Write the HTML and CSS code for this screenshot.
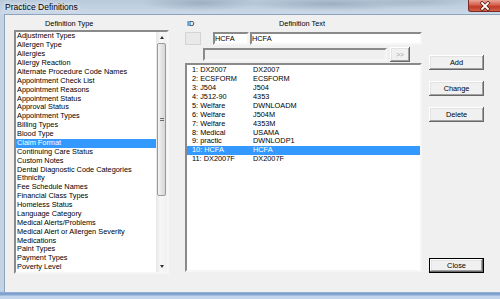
FILE: index.html
```html
<!doctype html>
<html>
  <head>
    <meta charset="UTF-8" />
    <title>Practice Definitions</title>
    <link rel="stylesheet" href="styles.css">
  </head>
  <body>
    <div class="window">
      <div class="titlebar">
        <span class="title">Practice Definitions</span>
        <span class="close-btn">
          <svg width="12" height="10" viewBox="0 0 12 10">
            <path d="M3 2 L9 8 M9 2 L3 8" stroke="#5a1a12" stroke-width="3.2" stroke-linecap="square" />
            <path d="M3 2 L9 8 M9 2 L3 8" stroke="#ffffff" stroke-width="1.8" stroke-linecap="square" />
          </svg>
        </span>
      </div>

      <div class="frame">
        <div class="client">
          <div class="type-panel">
            <div class="caption type-caption">Definition Type</div>
            <div class="listbox sunken">
              <ul class="type-list">
                <li>Adjustment Types</li>
                <li>Allergen Type</li>
                <li>Allergies</li>
                <li>Allergy Reaction</li>
                <li>Alternate Procedure Code Names</li>
                <li>Appointment Check List</li>
                <li>Appointment Reasons</li>
                <li>Appointment Status</li>
                <li>Approval Status</li>
                <li>Appointment Types</li>
                <li>Billing Types</li>
                <li>Blood Type</li>
                <li class="selected">Claim Format</li>
                <li>Continuing Care Status</li>
                <li>Custom Notes</li>
                <li>Dental Diagnostic Code Categories</li>
                <li>Ethnicity</li>
                <li>Fee Schedule Names</li>
                <li>Financial Class Types</li>
                <li>Homeless Status</li>
                <li>Language Category</li>
                <li>Medical Alerts/Problems</li>
                <li>Medical Alert or Allergen Severity</li>
                <li>Medications</li>
                <li>Paint Types</li>
                <li>Payment Types</li>
                <li>Poverty Level</li>
              </ul>
              <div class="scrollbar">
                <div class="sb-btn"><span class="arrow-up"></span></div>
                <div class="sb-thumb"><span class="grip"></span></div>
                <div class="sb-track"></div>
                <div class="sb-btn"><span class="arrow-down"></span></div>
              </div>
            </div>
          </div>

          <div class="def-panel">
            <div class="caption-row">
              <span class="caption id-caption">ID</span>
              <span class="caption">Definition Text</span>
            </div>
            <div class="edit-row">
              <div class="id-box"></div>
              <div class="edit sunken code-edit">HCFA</div>
              <div class="edit sunken text-edit">HCFA</div>
            </div>
            <div class="lookup-row">
              <div class="lookup sunken"></div>
              <button class="btn btn-small" disabled>&gt;&gt;</button>
            </div>
            <div class="def-list sunken">
              <div class="def-item"><span>1: DX2007</span><span>DX2007</span></div>
              <div class="def-item"><span>2: ECSFORM</span><span>ECSFORM</span></div>
              <div class="def-item"><span>3: J504</span><span>J504</span></div>
              <div class="def-item"><span>4: J512-90</span><span>4353</span></div>
              <div class="def-item"><span>5: Welfare</span><span>DWNLOADM</span></div>
              <div class="def-item"><span>6: Welfare</span><span>J504M</span></div>
              <div class="def-item"><span>7: Welfare</span><span>4353M</span></div>
              <div class="def-item"><span>8: Medical</span><span>USAMA</span></div>
              <div class="def-item"><span>9: practic</span><span>DWNLODP1</span></div>
              <div class="def-item selected"><span>10: HCFA</span><span>HCFA</span></div>
              <div class="def-item"><span>11: DX2007F</span><span>DX2007F</span></div>
            </div>
          </div>

          <div class="actions">
            <button class="btn">Add</button>
            <button class="btn">Change</button>
            <button class="btn">Delete</button>
            <button class="btn btn-default close">Close</button>
          </div>
        </div>
      </div>
    </div>
  </body>
</html>
```

FILE: styles.css
```css
:root {
  --face: #f0f0f0;
  --shadow: #a0a0a0;
  --dark: #696969;
  --highlight: #3399ff;
  --text: #000;
}

* {
  margin: 0;
  padding: 0;
  box-sizing: border-box;
}

body {
  width: 500px;
  height: 299px;
  overflow: hidden;
  font-family: 'Liberation Sans', Arial, sans-serif;
  font-size: 7.35px;
  color: var(--text);
}

.window {
  display: flex;
  flex-direction: column;
  height: 299px;
  background: #c5d4e4;
}

/* glass title bar */
.titlebar {
  display: flex;
  align-items: flex-start;
  height: 16px;
  background:
    radial-gradient(ellipse 60px 8px at 200px 3px, rgba(120, 138, 160, 0.45), transparent),
    radial-gradient(ellipse 90px 7px at 330px 4px, rgba(110, 128, 150, 0.4), transparent),
    radial-gradient(ellipse 50px 6px at 420px 2px, rgba(130, 146, 166, 0.35), transparent),
    linear-gradient(to bottom, #b9cadc, #cad8e7);
}

.title {
  padding: 2px 0 0 5px;
  font-size: 8.5px;
  line-height: 10px;
  text-shadow: 0 0 4px #fff, 0 0 6px rgba(255, 255, 255, 0.8);
}

.close-btn {
  display: flex;
  align-items: center;
  justify-content: center;
  margin-left: auto;
  width: 32px;
  height: 12px;
  border: 1px solid #7a2a20;
  border-top: none;
  border-right: none;
  border-radius: 0 0 0 3px;
  background: linear-gradient(to bottom, #e9a699 0%, #d6604c 45%, #c13b28 60%, #d0604a 100%);
}

.frame {
  flex: 1;
  display: flex;
  padding: 0 0 7px 4px;
  background:
    linear-gradient(to bottom, transparent 276px, #c9dbf0 276px, #a9c3e2 278px, #7c9dcb 279px, #86a6d2 281px, #c2d5ec 282px);
}

.client {
  flex: 1;
  display: flex;
  padding: 4px 0 18px 9px;
  background: var(--face);
  border-top: 1px solid #8ea3bc;
  border-left: 1px solid #8ea3bc;
}

.caption {
  display: block;
  line-height: 10px;
}

.sunken {
  border: 2px solid;
  border-color: #8a8a8a #f6f6f6 #f6f6f6 #8a8a8a;
}

/* left column */
.type-panel {
  display: flex;
  flex-direction: column;
  width: 155px;
}

.type-caption {
  padding-left: 31px;
  margin-bottom: 1px;
}

.listbox {
  flex: 1;
  display: flex;
  background: #fff;
}

.type-list {
  flex: 1;
  list-style: none;
}

.type-list li {
  height: 8.88px;
  line-height: 8.88px;
  padding-left: 1px;
  white-space: nowrap;
}

.selected {
  background: var(--highlight);
  color: #fff;
}

.scrollbar {
  display: flex;
  flex-direction: column;
  width: 11px;
  background: linear-gradient(to right, #e6e6e6, #f7f7f7 40%, #f1f1f1);
}

.sb-btn {
  display: flex;
  align-items: center;
  justify-content: center;
  height: 11px;
}

.arrow-up,
.arrow-down {
  width: 0;
  height: 0;
  border-left: 2.5px solid transparent;
  border-right: 2.5px solid transparent;
}

.arrow-up {
  border-bottom: 3px solid #333;
}

.arrow-down {
  border-top: 3px solid #333;
}

.sb-thumb {
  display: flex;
  align-items: center;
  justify-content: center;
  height: 153px;
  margin: 0 1px;
  border: 1px solid #9a9a9a;
  border-radius: 2px;
  background: linear-gradient(to right, #f4f4f4, #e4e4e4 50%, #d6d6d6);
}

.grip {
  width: 4px;
  height: 4px;
  background: repeating-linear-gradient(to bottom, #6c6c6c 0 1px, transparent 1px 2px);
}

.sb-track {
  flex: 1;
}

/* middle column */
.def-panel {
  display: flex;
  flex-direction: column;
  width: 237px;
  margin-left: 16px;
}

.caption-row {
  display: flex;
}

.id-caption {
  width: 94px;
  padding-left: 2px;
}

.edit-row {
  display: flex;
  height: 13px;
  margin-top: 3px;
}

.id-box {
  width: 16px;
  margin-right: 12px;
  background: #e9e9e9;
  border: 1px solid #d4d4d4;
}

.edit {
  background: #fff;
  line-height: 9px;
  white-space: nowrap;
}

.code-edit {
  width: 36px;
  margin-right: 1px;
}

.text-edit {
  flex: 1;
}

.lookup-row {
  display: flex;
  align-items: center;
  height: 15px;
  margin-top: 2px;
}

.lookup {
  width: 184px;
  height: 13px;
  margin-left: 18px;
  margin-right: 3px;
  background: var(--face);
}

.def-list {
  flex: 1;
  margin: 1px 0 2px;
  padding-top: 1px;
  background: #fff;
}

.def-item {
  display: grid;
  grid-template-columns: 61px 1fr;
  height: 8.88px;
  line-height: 8.88px;
  padding-left: 5px;
  white-space: nowrap;
}

/* right column */
.actions {
  display: flex;
  flex-direction: column;
  gap: 11px;
  width: 55px;
  margin-left: 7px;
  padding-top: 36px;
}

.btn {
  width: 55px;
  height: 15px;
  border: none;
  font-family: inherit;
  font-size: 7.35px;
  color: var(--text);
  background: var(--face);
  box-shadow:
    inset -1px -1px 0 var(--dark),
    inset 1px 1px 0 #fff,
    inset -2px -2px 0 var(--shadow),
    inset 2px 2px 0 #e3e3e3;
}

.btn-small {
  width: 20px;
  color: var(--shadow);
  font-size: 6.5px;
}

.btn-default {
  border: 1px solid #000;
}

.close {
  margin-top: auto;
  margin-bottom: 1px;
}
```
